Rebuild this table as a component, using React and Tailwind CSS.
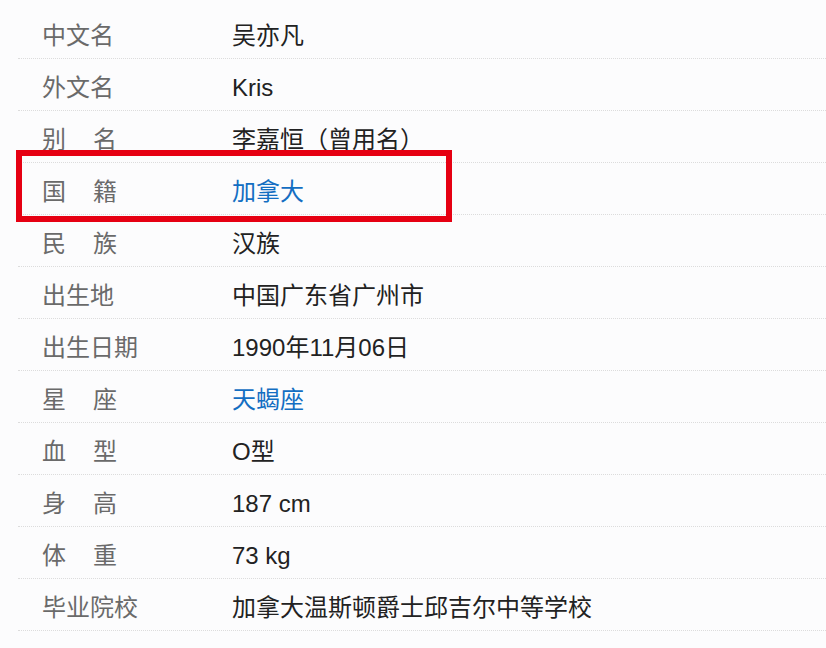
const rows = [
  { label: "中文名", value: "吴亦凡" },
  { label: "外文名", value: "Kris" },
  { label: "别名", value: "李嘉恒（曾用名）" },
  { label: "国籍", value: "加拿大", link: true, highlight: true },
  { label: "民族", value: "汉族" },
  { label: "出生地", value: "中国广东省广州市" },
  { label: "出生日期", value: "1990年11月06日" },
  { label: "星座", value: "天蝎座", link: true },
  { label: "血型", value: "O型" },
  { label: "身高", value: "187 cm" },
  { label: "体重", value: "73 kg" },
  { label: "毕业院校", value: "加拿大温斯顿爵士邱吉尔中等学校" },
];

function Label({ text }) {
  // two-char labels are spread over three-char width
  if (text.length === 2) {
    return (
      <div className="flex w-[75px] justify-between">
        <span>{text[0]}</span>
        <span>{text[1]}</span>
      </div>
    );
  }
  return <div className="whitespace-nowrap">{text}</div>;
}

export default function App() {
  return (
    <div
      className="relative h-[648px] w-[826px] overflow-hidden bg-[#fcfcfd] pt-[7px]"
      style={{ fontFamily: '"Liberation Sans", "Noto Sans CJK SC", sans-serif' }}
    >
      {rows.map((row, i) => (
        <div
          key={i}
          className="ml-[18px] flex h-[52px] items-center border-b border-dotted border-[#dcdcdc] pt-[7px] text-[24px]"
        >
          <div className="w-[214px] pl-[24px] text-[#6a6a6a]">
            <Label text={row.label} />
          </div>
          <div className={row.link ? "text-[#136ec2]" : "text-[#222]"}>{row.value}</div>
        </div>
      ))}

      {/* highlight box */}
      <div className="absolute left-[16px] top-[150px] h-[72px] w-[436px] border-[6px] border-[#e60012]" />
    </div>
  );
}
